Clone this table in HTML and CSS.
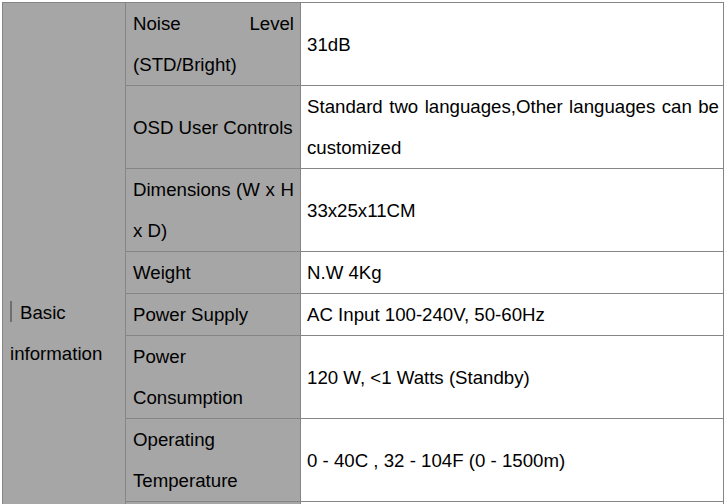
FILE: index.html
```html
<!DOCTYPE html>
<html lang="en">
<head>
<meta charset="utf-8">
<title>Basic information</title>
<link rel="stylesheet" href="styles.css">
</head>
<body>
<div class="spec">
  <div class="group"><span class="mark"></span>Basic information</div>

  <div class="label">Noise Level (STD/Bright)</div>
  <div class="value">31dB</div>

  <div class="label">OSD User Controls</div>
  <div class="value">Standard two languages,Other languages can be customized</div>

  <div class="label">Dimensions (W x H x D)</div>
  <div class="value">33x25x11CM</div>

  <div class="label">Weight</div>
  <div class="value">N.W 4Kg</div>

  <div class="label">Power Supply</div>
  <div class="value">AC Input 100-240V, 50-60Hz</div>

  <div class="label">Power Consumption</div>
  <div class="value">120 W, &lt;1 Watts (Standby)</div>

  <div class="label">Operating Temperature</div>
  <div class="value">0 - 40C , 32 - 104F (0 - 1500m)</div>

  <div class="label"></div>
  <div class="value"></div>
</div>
</body>
</html>
```

FILE: styles.css
```css
html, body {
  margin: 0;
  height: 504px;
  overflow: hidden;
  background: #ffffff;
}

body {
  padding: 2px 0 0 2px;
  box-sizing: border-box;
  font-family: "Liberation Sans", Arial, sans-serif;
  font-size: 18.67px;
  line-height: 41px;
  color: #000000;
}

.spec {
  display: grid;
  grid-template-columns: 122px 174px 422px;
  grid-auto-rows: minmax(41px, auto);
  gap: 1px;
  padding: 1px;
  width: max-content;
  background: #858585;
}

.group {
  grid-column: 1;
  grid-row: 1 / span 8;
  background: #a6a6a6;
  padding: 289px 7px 0 7px;
}

.mark {
  display: inline-block;
  width: 2px;
  height: 21px;
  margin-right: 8px;
  vertical-align: -3px;
  background: #6f6f6f;
}

.label {
  grid-column: 2;
  display: flex;
  align-items: center;
  padding: 0 6px 0 7px;
  background: #a6a6a6;
  text-align: justify;
}

.value {
  grid-column: 3;
  display: flex;
  align-items: center;
  padding: 0 4px 0 6px;
  background: #ffffff;
  text-align: justify;
}
```
